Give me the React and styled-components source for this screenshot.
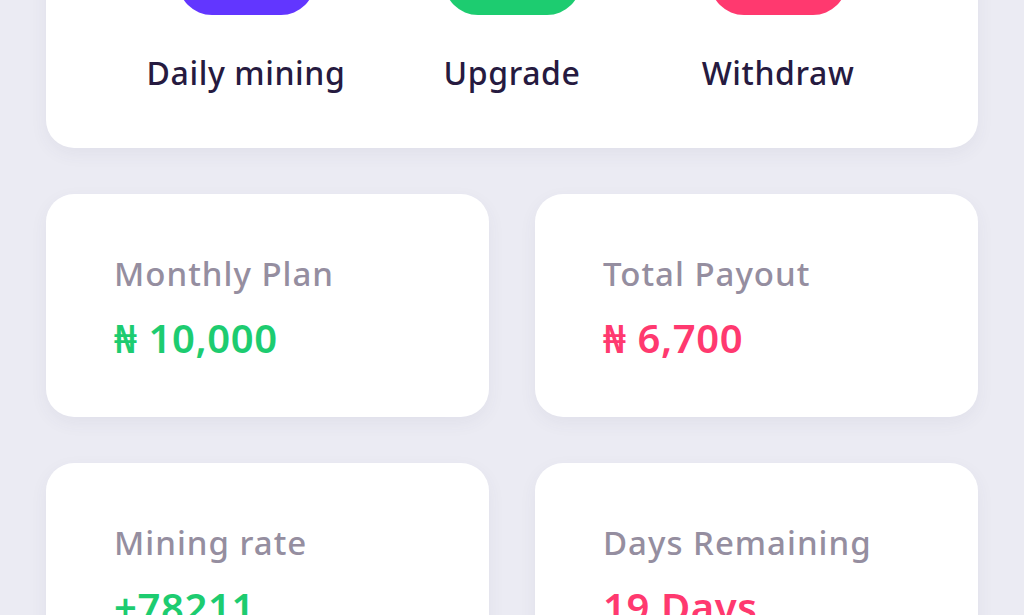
import styled, { createGlobalStyle } from "styled-components";

const Global = createGlobalStyle`
  html, body {
    margin: 0;
    padding: 0;
    background: #ebebf3;
    font-family: "Noto Sans", "DejaVu Sans", sans-serif;
    overflow: hidden;
  }
`;

const Page = styled.div`
  padding: 0 46px;
  display: flex;
  flex-direction: column;
  gap: 46px;
`;

const Card = styled.div`
  background: #ffffff;
  border-radius: 28px;
  box-shadow: 0 6px 18px rgba(60, 60, 110, 0.06);
`;

const ActionCard = styled(Card)`
  margin-top: -130px;
  padding: 25px 67px 51px;
  display: grid;
  grid-template-columns: repeat(3, 1fr);
`;

const Action = styled.div`
  display: flex;
  flex-direction: column;
  align-items: center;
  gap: 34px;
`;

const ActionIcon = styled.div`
  width: 137px;
  height: 120px;
  border-radius: 34px;
  background: ${(p) => p.color};
`;

const ActionLabel = styled.div`
  font-size: 32px;
  line-height: 48px;
  font-weight: 500;
  letter-spacing: 0.6px;
  color: #261a40;
`;

const Grid = styled.div`
  display: grid;
  grid-template-columns: 1fr 1fr;
  gap: 46px;
`;

const StatCard = styled(Card)`
  height: 223px;
  box-sizing: border-box;
  padding: 58px 68px 0;
  display: flex;
  flex-direction: column;
  gap: 17px;
`;

const StatLabel = styled.div`
  font-size: 33px;
  line-height: 44px;
  font-weight: 500;
  letter-spacing: 1px;
  color: #958ea0;
`;

const StatValue = styled.div`
  font-size: 40px;
  line-height: 50px;
  font-weight: 600;
  letter-spacing: 0.6px;
  color: ${(p) => p.color};
`;

const GREEN = "#1dcc70";
const PINK = "#ff396f";

const actions = [
  { label: "Daily mining", color: "#6236ff" },
  { label: "Upgrade", color: GREEN },
  { label: "Withdraw", color: PINK },
];

const stats = [
  { label: "Monthly Plan", value: "₦ 10,000", color: GREEN },
  { label: "Total Payout", value: "₦ 6,700", color: PINK },
  { label: "Mining rate", value: "+78211", color: GREEN },
  { label: "Days Remaining", value: "19 Days", color: PINK },
];

export default function App() {
  return (
    <>
      <Global />
      <Page>
        <ActionCard>
          {actions.map((a) => (
            <Action key={a.label}>
              <ActionIcon color={a.color} />
              <ActionLabel>{a.label}</ActionLabel>
            </Action>
          ))}
        </ActionCard>
        <Grid>
          {stats.map((s) => (
            <StatCard key={s.label}>
              <StatLabel>{s.label}</StatLabel>
              <StatValue color={s.color}>{s.value}</StatValue>
            </StatCard>
          ))}
        </Grid>
      </Page>
    </>
  );
}
